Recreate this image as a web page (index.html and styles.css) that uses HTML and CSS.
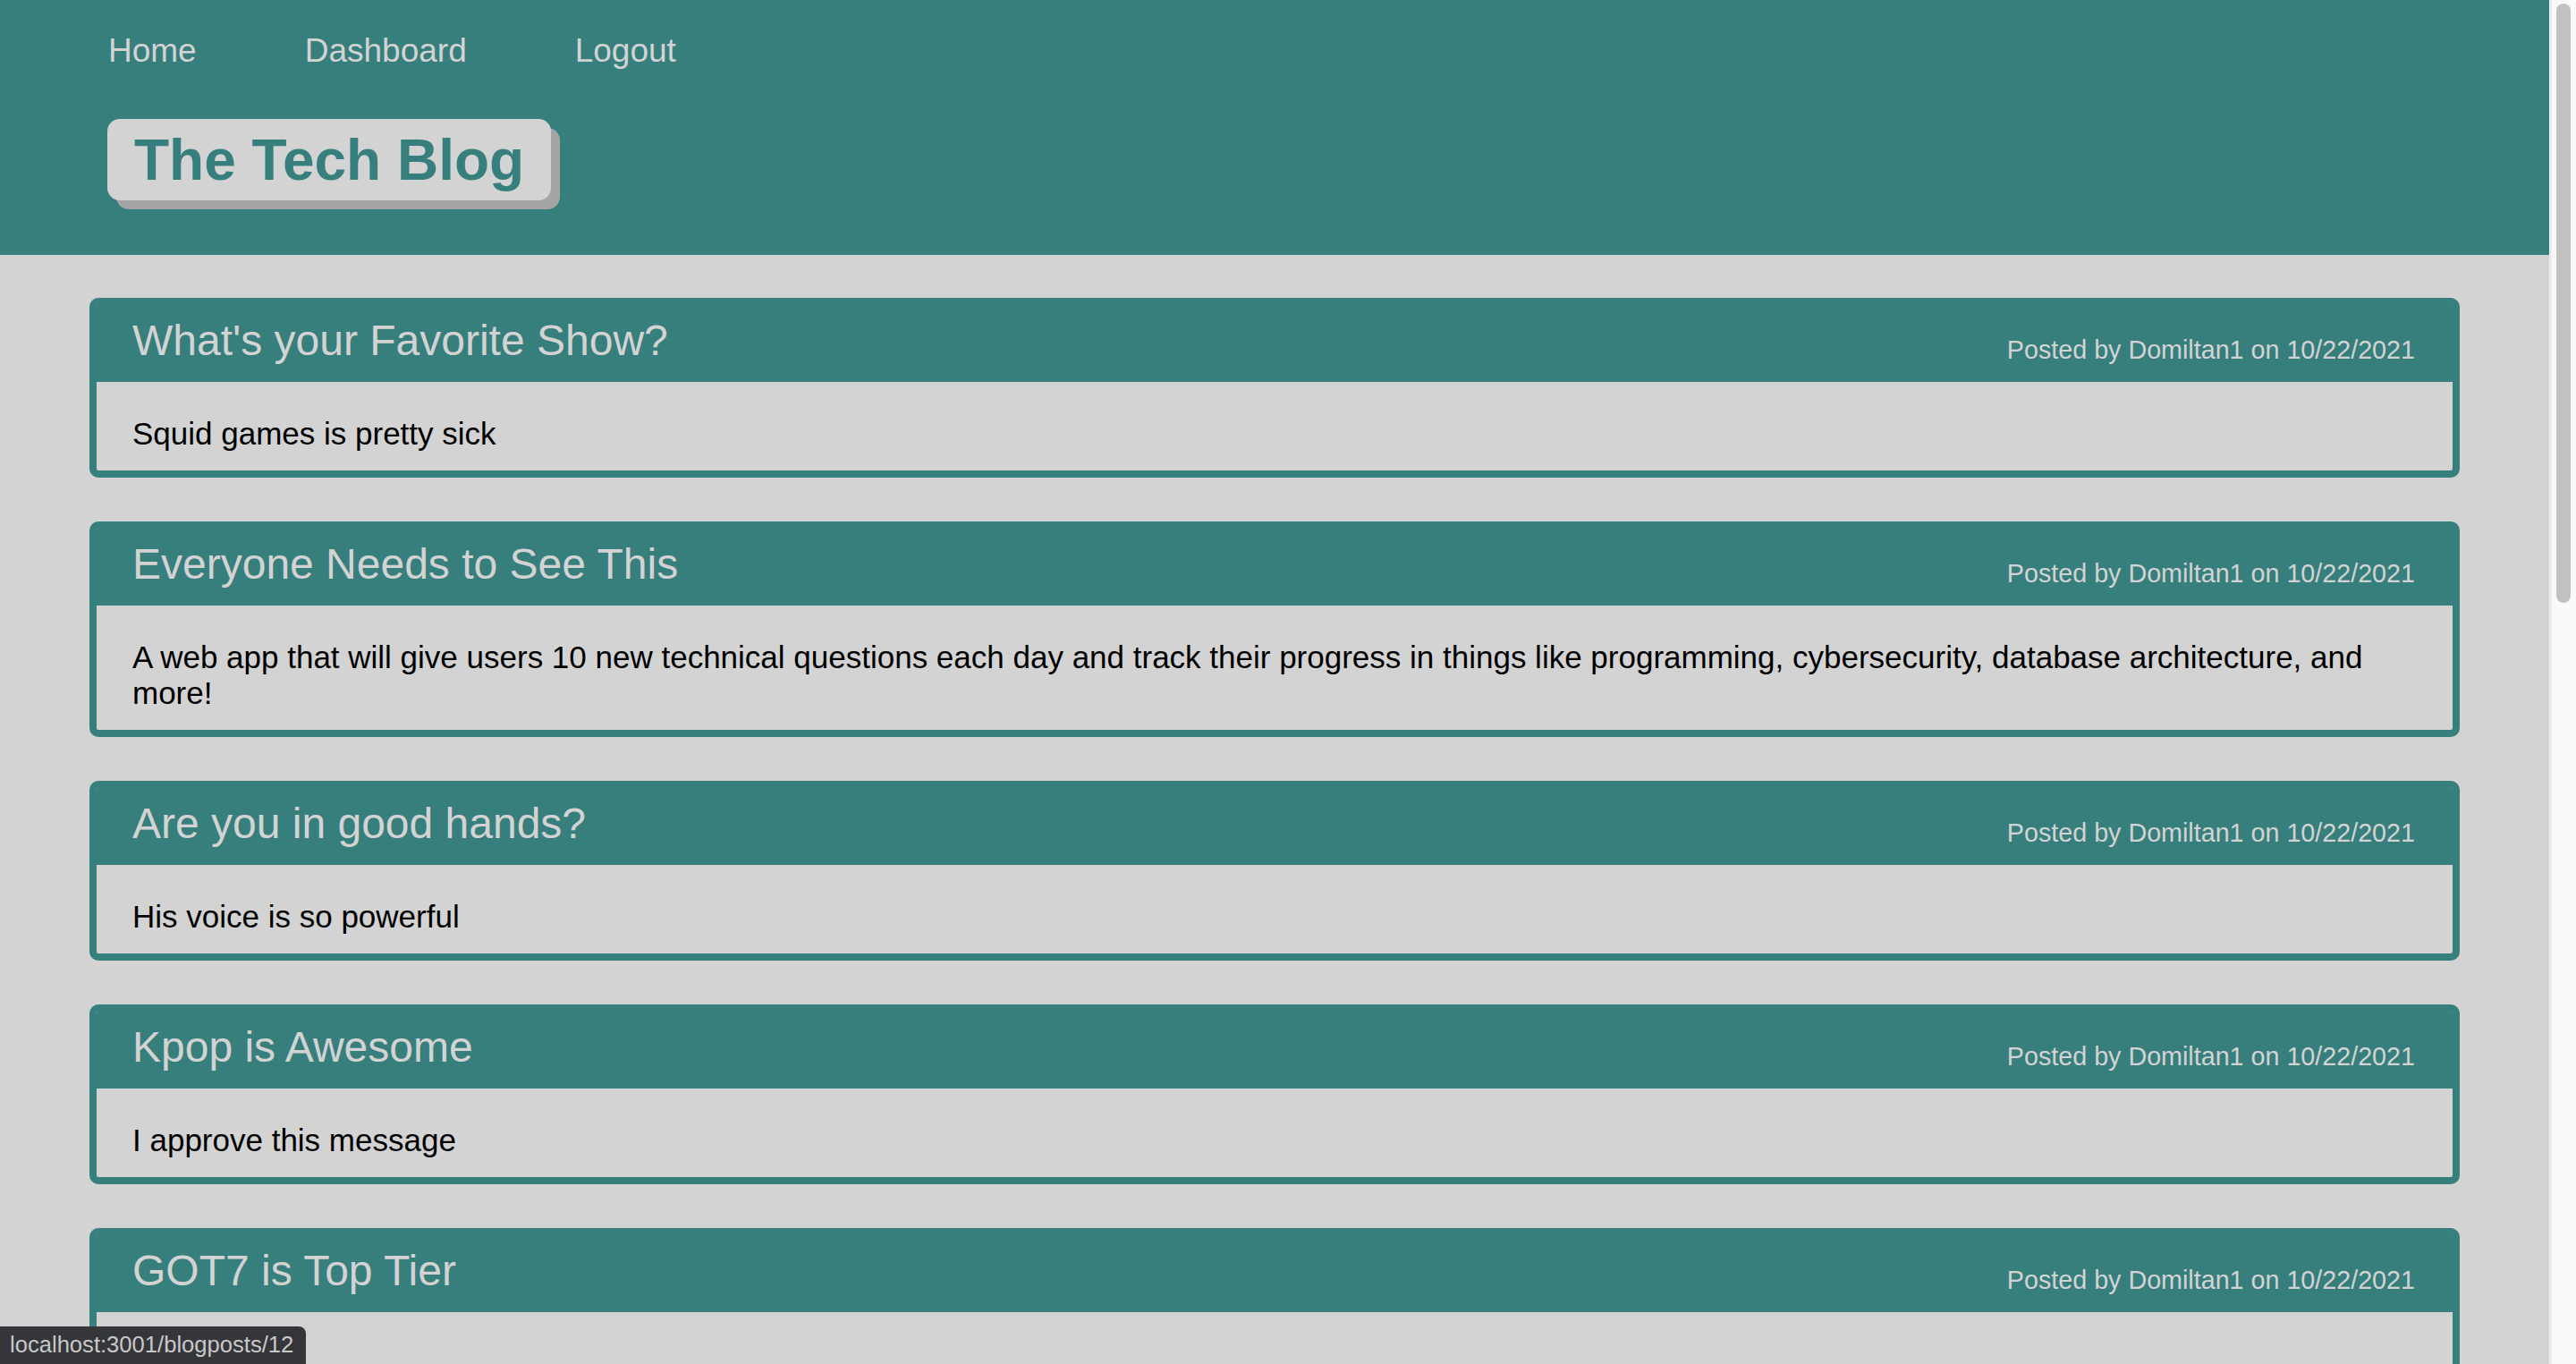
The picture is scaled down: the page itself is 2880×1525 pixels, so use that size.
FILE: index.html
```html
<!DOCTYPE html>
<html lang="en">
<head>
<meta charset="utf-8">
<title>The Tech Blog</title>
<link rel="stylesheet" href="styles.css">
</head>
<body>
<div class="window">
  <div class="page">
    <header class="site-header">
      <nav class="nav">
        <a href="#" class="nav-link">Home</a>
        <a href="#" class="nav-link">Dashboard</a>
        <a href="#" class="nav-link">Logout</a>
      </nav>
      <h1 class="brand">The Tech Blog</h1>
    </header>
    <main class="posts">
      <article class="card">
        <div class="card-head">
          <h2 class="card-title">What's your Favorite Show?</h2>
          <p class="card-meta">Posted by Domiltan1 on 10/22/2021</p>
        </div>
        <div class="card-body"><p>Squid games is pretty sick</p></div>
      </article>
      <article class="card">
        <div class="card-head">
          <h2 class="card-title">Everyone Needs to See This</h2>
          <p class="card-meta">Posted by Domiltan1 on 10/22/2021</p>
        </div>
        <div class="card-body"><p>A web app that will give users 10 new technical questions each day and track their progress in things like programming, cybersecurity, database architecture, and more!</p></div>
      </article>
      <article class="card">
        <div class="card-head">
          <h2 class="card-title">Are you in good hands?</h2>
          <p class="card-meta">Posted by Domiltan1 on 10/22/2021</p>
        </div>
        <div class="card-body"><p>His voice is so powerful</p></div>
      </article>
      <article class="card">
        <div class="card-head">
          <h2 class="card-title">Kpop is Awesome</h2>
          <p class="card-meta">Posted by Domiltan1 on 10/22/2021</p>
        </div>
        <div class="card-body"><p>I approve this message</p></div>
      </article>
      <article class="card">
        <div class="card-head">
          <h2 class="card-title">GOT7 is Top Tier</h2>
          <p class="card-meta">Posted by Domiltan1 on 10/22/2021</p>
        </div>
        <div class="card-body"><p>&nbsp;</p></div>
      </article>
    </main>
  </div>
  <div class="scrollbar"><div class="thumb"></div></div>
</div>
<div class="status">localhost:3001/blogposts/12</div>
</body>
</html>
```
FILE: styles.css
```css
* { box-sizing: border-box; }

html, body {
  margin: 0;
  padding: 0;
  height: 100%;
  overflow: hidden;
}

body {
  font-family: "Liberation Sans", Arial, Helvetica, sans-serif;
  background: #d3d3d3;
  color: #000;
}

.window {
  display: grid;
  grid-template-columns: 1fr 30px;
  height: 100vh;
  overflow: hidden;
}

.page {
  min-width: 0;
  overflow: hidden;
  background: #d3d3d3;
}

.site-header {
  background: #377f7d;
  padding: 36px 0 61px 120px;
}

.nav {
  display: flex;
  gap: 121px;
  padding-left: 1px;
}

.nav-link {
  color: #d3d3d3;
  text-decoration: none;
  font-size: 37px;
  line-height: 41px;
}

.brand {
  display: inline-block;
  margin: 56px 0 0;
  padding: 9px 30px 8px;
  background: #d3d3d3;
  color: #377f7d;
  font-size: 64px;
  font-weight: 700;
  line-height: normal;
  border-radius: 14px;
  box-shadow: 10px 10px 0 #a6a5a6;
}

.posts {
  display: flex;
  flex-direction: column;
  gap: 49px;
  padding: 48px 100px 0;
}

.card {
  border: 8px solid #377f7d;
  border-radius: 10px;
  background: #d3d3d3;
  overflow: hidden;
}

.card-head {
  display: flex;
  justify-content: space-between;
  align-items: flex-end;
  background: #377f7d;
  color: #d3d3d3;
  padding: 12px 42px 19px 40px;
}

.card-title {
  margin: 0;
  font-size: 48px;
  font-weight: 400;
  line-height: normal;
}

.card-meta {
  margin: 0;
  font-size: 28.7px;
  line-height: normal;
}

.card-body {
  padding: 38px 40px 21px;
}

.card-body p {
  margin: 0;
  font-size: 35px;
  line-height: normal;
}

.scrollbar {
  background: #f9f9f9;
  border-left: 3px solid #ececec;
  padding: 4px 0 0 5px;
}

.thumb {
  width: 16px;
  height: 670px;
  border-radius: 8px;
  background: #c1c1c1;
}

.status {
  position: fixed;
  left: 0;
  bottom: 0;
  background: #35363a;
  color: #c8c8c8;
  font-size: 25.6px;
  line-height: normal;
  padding: 6px 14px 7px 11px;
  border-top-right-radius: 8px;
}
```
